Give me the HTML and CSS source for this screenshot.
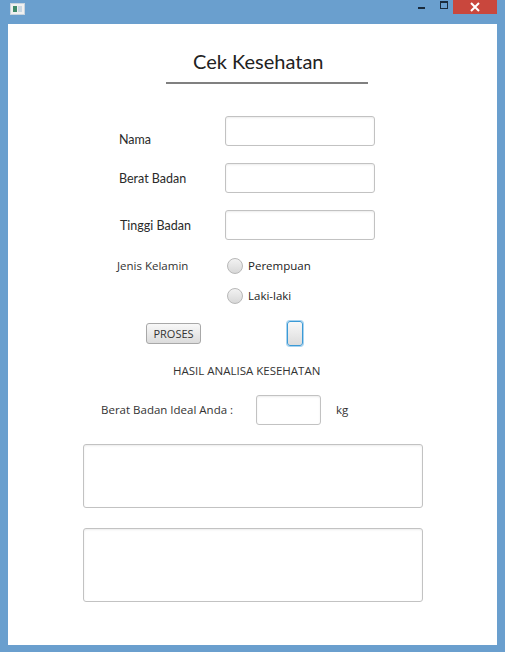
FILE: index.html
```html
<!DOCTYPE html>
<html>
<head>
<meta charset="utf-8">
<link rel="stylesheet" href="styles.css">
</head>
<body>
<div class="window">
  <div class="titlebar">
    <div class="appicon"><span class="ai-a"></span><span class="ai-b"></span></div>
    <div class="spacer"></div>
    <div class="ctl min"><span></span></div>
    <div class="ctl max"><span></span></div>
    <div class="ctl close">
      <svg width="12" height="10" viewBox="0 0 12 10"><path d="M2 1 L10 9 M10 1 L2 9" stroke="#fff" stroke-width="2"/></svg>
    </div>
  </div>
  <div class="panel">
    <div class="heading">
      <h1 class="title">Cek Kesehatan</h1>
      <div class="rule"></div>
    </div>

    <div class="row r1">
      <label class="lbl g lbl-n">Nama</label>
      <div class="field"></div>
    </div>
    <div class="row r2">
      <label class="lbl g lbl-b">Berat Badan</label>
      <div class="field"></div>
    </div>
    <div class="row r3">
      <label class="lbl g lbl-t">Tinggi Badan</label>
      <div class="field"></div>
    </div>

    <div class="row radio-row r4">
      <span class="lbl s lbl-j">Jenis Kelamin</span>
      <span class="radio"></span><span class="s rtext">Perempuan</span>
    </div>
    <div class="row radio-row r5">
      <span class="radio"></span><span class="s rtext">Laki-laki</span>
    </div>

    <div class="row btn-row">
      <button class="btn">PROSES</button>
      <button class="btn focus"></button>
    </div>

    <div class="result-title s">HASIL ANALISA KESEHATAN</div>

    <div class="row ideal-row">
      <span class="s ideal-lbl">Berat Badan Ideal Anda :</span>
      <div class="field small"></div>
      <span class="s kg">kg</span>
    </div>

    <div class="area a1"></div>
    <div class="area a2"></div>
  </div>
</div>
</body>
</html>
```

FILE: styles.css
```css
* { box-sizing: border-box; }
html, body { margin: 0; padding: 0; }
body {
  width: 505px;
  height: 652px;
  background: #6a9fce;
  font-family: "Open Sans", "Liberation Sans", sans-serif;
  color: #333;
  overflow: hidden;
}
.window { width: 505px; height: 652px; display: flex; flex-direction: column; }
.titlebar {
  height: 24px;
  display: flex;
  align-items: flex-start;
  padding-left: 10px;
  padding-right: 8px;
}
.appicon {
  margin-top: 3px;
  width: 15px;
  height: 12px;
  background: #f0f0f0;
  border: 1px solid #c8d4de;
  display: flex;
  padding: 2px;
  gap: 1px;
}
.ai-a { width: 5px; background: #3e8a6a; }
.ai-b { width: 5px; background: #c9d7e3; }
.spacer { flex: 1; }
.ctl { display: flex; justify-content: center; }
.min { width: 26px; padding-top: 7px; }
.min span { width: 7px; height: 2px; background: #1a2b3c; display: block; }
.max { width: 19px; padding-top: 1px; }
.max span { width: 8px; height: 8px; border: 1px solid #1a2b3c; border-top-width: 2px; display: block; }
.close {
  width: 44px;
  height: 14px;
  background: #c9473d;
  align-items: center;
}
.close svg { display: block; }

.panel {
  margin: 0 8px;
  height: 621px;
  background: #fff;
  padding-top: 25px;
}
.heading { margin-left: 158px; width: 202px; }
.title {
  margin: 0 0 0 27px;
  font-family: "Lato", "Open Sans", sans-serif;
  font-weight: normal;
  font-size: 20px;
  line-height: 24px;
  color: #222;
}
.rule { margin-top: 9px; height: 2px; background: #808080; }

.row { display: flex; align-items: flex-start; }
.lbl { width: 106px; }
.g {
  font-family: "Lato", "Open Sans", sans-serif;
  font-size: 12.5px;
  line-height: 16px;
  color: #2a2a2a;
}
.s {
  font-family: "Open Sans", "Liberation Sans", sans-serif;
  font-size: 11.5px;
  line-height: 16px;
  color: #333;
}
.lbl-n { margin-top: 16px; }
.lbl-b { margin-top: 8px; }
.lbl-t { margin-top: 8px; padding-left: 1px; }
.r1 { margin-top: 32px; padding-left: 111px; }
.r2 { margin-top: 15px; padding-left: 111px; }
.r3 { margin-top: 17px; padding-left: 111px; }
.field {
  width: 150px;
  height: 30px;
  border: 1px solid #c2c2c2;
  border-radius: 3px;
  box-shadow: inset 0 1px 2px rgba(0,0,0,0.08);
  background: #fff;
}
.radio-row { align-items: center; }
.r4 { margin-top: 18px; padding-left: 109px; }
.lbl-j { width: 110px; }
.r5 { margin-top: 14px; padding-left: 219px; }
.radio {
  width: 16px;
  height: 16px;
  border-radius: 50%;
  border: 1px solid #b8b8b8;
  background: linear-gradient(#f2f2f2, #d8d8d8);
  margin-right: 5px;
}
.rtext { color: #222; }

.btn-row { margin-top: 17px; padding-left: 138px; align-items: center; }
.btn {
  margin: 0;
  padding: 0;
  width: 55px;
  height: 21px;
  border: 1px solid #a8a8a8;
  border-radius: 3px;
  background: linear-gradient(#f8f8f8, #dcdcdc);
  font-family: "Open Sans", "Liberation Sans", sans-serif;
  font-size: 11px;
  color: #333;
}
.btn.focus {
  margin-left: 86px;
  width: 16px;
  height: 25px;
  border: 1px solid #3b9ad6;
  box-shadow: 0 0 0 1px #a9d3ef;
}

.result-title { margin-top: 17px; padding-left: 165px; }

.ideal-row { margin-top: 16px; padding-left: 93px; align-items: center; }
.ideal-lbl { width: 155px; }
.field.small { width: 65px; }
.kg { margin-left: 15px; }

.area {
  margin-left: 75px;
  width: 340px;
  border: 1px solid #c2c2c2;
  border-radius: 3px;
  box-shadow: inset 0 1px 2px rgba(0,0,0,0.08);
}
.a1 { margin-top: 19px; height: 64px; }
.a2 { margin-top: 20px; height: 74px; }
```
